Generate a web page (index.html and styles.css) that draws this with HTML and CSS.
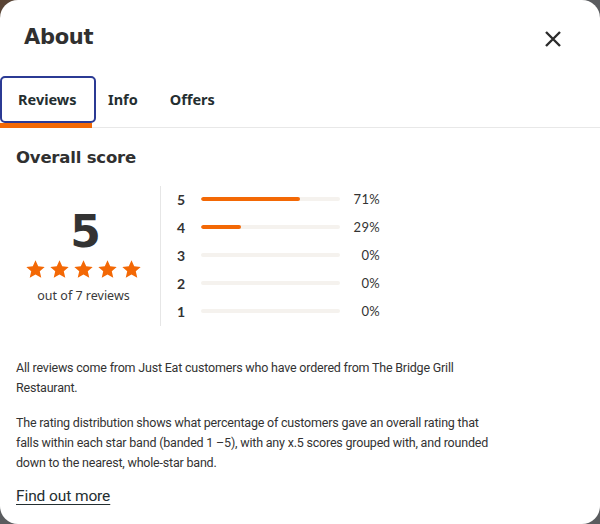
FILE: index.html
```html
<!DOCTYPE html>
<html lang="en">
<head>
<meta charset="utf-8">
<title>About</title>
<link rel="stylesheet" href="styles.css">
</head>
<body>
<div class="modal">
  <header class="head">
    <h1 class="title">About</h1>
    <button class="close" aria-label="Close">
      <svg width="18" height="18" viewBox="0 0 18 18"><path d="M2 2L16 16M16 2L2 16" stroke="#2c2c2c" stroke-width="2.4" stroke-linecap="butt"/></svg>
    </button>
  </header>
  <nav class="tabs">
    <div class="tab active">Reviews</div>
    <div class="tab">Info</div>
    <div class="tab">Offers</div>
  </nav>
  <section class="content">
    <h2 class="sub">Overall score</h2>
    <div class="score">
      <div class="summary">
        <div class="big">5</div>
        <div class="stars">
          <svg viewBox="0 0 24 24"><path d="M12 1.5l3.1 6.9 7.4.7-5.6 5 1.7 7.4L12 17.6l-6.6 3.9 1.7-7.4-5.6-5 7.4-.7z"/></svg>
          <svg viewBox="0 0 24 24"><path d="M12 1.5l3.1 6.9 7.4.7-5.6 5 1.7 7.4L12 17.6l-6.6 3.9 1.7-7.4-5.6-5 7.4-.7z"/></svg>
          <svg viewBox="0 0 24 24"><path d="M12 1.5l3.1 6.9 7.4.7-5.6 5 1.7 7.4L12 17.6l-6.6 3.9 1.7-7.4-5.6-5 7.4-.7z"/></svg>
          <svg viewBox="0 0 24 24"><path d="M12 1.5l3.1 6.9 7.4.7-5.6 5 1.7 7.4L12 17.6l-6.6 3.9 1.7-7.4-5.6-5 7.4-.7z"/></svg>
          <svg viewBox="0 0 24 24"><path d="M12 1.5l3.1 6.9 7.4.7-5.6 5 1.7 7.4L12 17.6l-6.6 3.9 1.7-7.4-5.6-5 7.4-.7z"/></svg>
        </div>
        <div class="count">out of 7 reviews</div>
      </div>
      <div class="dist">
        <div class="row"><span class="n">5</span><span class="track"><span class="fill" style="width:71%"></span></span><span class="pct">71%</span></div>
        <div class="row"><span class="n">4</span><span class="track"><span class="fill" style="width:29%"></span></span><span class="pct">29%</span></div>
        <div class="row"><span class="n">3</span><span class="track"></span><span class="pct">0%</span></div>
        <div class="row"><span class="n">2</span><span class="track"></span><span class="pct">0%</span></div>
        <div class="row"><span class="n">1</span><span class="track"></span><span class="pct">0%</span></div>
      </div>
    </div>
    <p class="txt">All reviews come from Just Eat customers who have ordered from The Bridge Grill Restaurant.</p>
    <p class="txt">The rating distribution shows what percentage of customers gave an overall rating that falls within each star band (banded 1 –5), with any x.5 scores grouped with, and rounded down to the nearest, whole-star band.</p>
    <a class="more" href="#">Find out more</a>
  </section>
</div>
</body>
</html>
```
FILE: styles.css
```css
* { box-sizing: border-box; }
html, body { margin: 0; padding: 0; }
body {
  width: 600px;
  height: 524px;
  background: linear-gradient(135deg, #5a4332 0%, #5a5c5f 8%, #5a5c5f 100%);
  font-family: "Roboto", "Noto Sans", sans-serif;
  color: #303030;
  overflow: hidden;
}
.modal {
  width: 600px;
  height: 524px;
  background: #fff;
  border-radius: 18px;
  overflow: hidden;
}
.head {
  display: flex;
  justify-content: space-between;
  padding: 20px 38px 0 24px;
  height: 76px;
  align-items: flex-start;
}
.title {
  margin: 0;
  padding-top: 2px;
  font-family: "DejaVu Sans", sans-serif;
  font-weight: 700;
  font-size: 21px;
  letter-spacing: -0.3px;
  color: #303030;
  line-height: 30px;
}
.close {
  border: 0;
  background: none;
  padding: 0;
  margin-top: 10px;
  width: 18px;
  height: 18px;
  display: flex;
}
.tabs {
  display: flex;
  height: 52px;
  border-bottom: 1px solid #e8e8e8;
  align-items: flex-start;
}
.tab {
  font-family: "Noto Sans", sans-serif;
  font-weight: 700;
  font-size: 14.5px;
  color: #242e30;
  height: 51px;
  padding: 13px 16px 0 14px;
  line-height: 20px;
}
.tab.active {
  position: relative;
  width: 96px;
  padding-left: 16px;
  height: 47px;
  border: 2px solid #2b3a94;
  border-radius: 5px;
  padding-top: 11px;
}
.tab.active::after {
  content: "";
  position: absolute;
  left: -2px;
  top: 45px;
  width: 92px;
  height: 5px;
  background: #f36805;
}
.tab:nth-child(2) { padding-left: 12px; padding-right: 18px; }
.content { padding: 0 16px; }
.sub {
  margin: 18px 0 0;
  font-family: "DejaVu Sans", sans-serif;
  font-weight: 700;
  font-size: 16.5px;
  color: #303030;
  line-height: 24px;
  letter-spacing: -0.2px;
}
.score {
  display: flex;
  margin-top: 16px;
  height: 140px;
}
.summary {
  width: 145px;
  padding-right: 9px;
  border-right: 1px solid #e6e6e6;
  display: flex;
  flex-direction: column;
  align-items: center;
  padding-top: 24px;
}
.big {
  font-family: "DejaVu Sans", sans-serif;
  font-weight: 700;
  font-size: 44px;
  line-height: 44px;
  color: #333;
  margin-left: 4px;
}
.stars {
  display: flex;
  gap: 3px;
  margin-top: 5px;
}
.stars svg { width: 21px; height: 21px; fill: #f36805; }
.count {
  font-family: "Noto Sans", sans-serif;
  font-size: 12.5px;
  color: #3a3a3a;
  margin-top: 7px;
  line-height: 18px;
}
.dist {
  display: flex;
  flex-direction: column;
  padding-left: 16px;
  margin-top: -1px;
}
.row {
  display: flex;
  align-items: center;
  height: 28px;
}
.n {
  width: 24px;
  font-family: "Lato", sans-serif;
  font-weight: 700;
  font-size: 14px;
  color: #333;
}
.track {
  width: 139px;
  height: 4px;
  border-radius: 2px;
  background: #f5f2ee;
  overflow: hidden;
  display: flex;
}
.fill { height: 4px; background: #f36805; border-radius: 2px; }
.pct {
  width: 40px;
  text-align: right;
  font-family: "Lato", sans-serif;
  font-size: 13px;
  color: #333;
  letter-spacing: 0.3px;
}
.txt {
  margin: 32px 0 0;
  font-size: 12.5px;
  letter-spacing: -0.2px;
  line-height: 20px;
  color: #333;
  width: 478px;
}
.txt + .txt { margin-top: 15px; }
.more {
  display: inline-block;
  margin-top: 13px;
  font-size: 15.5px;
  letter-spacing: -0.1px;
  color: #242e30;
  line-height: 20px;
  text-decoration: underline;
  text-underline-offset: 3px;
}
```
